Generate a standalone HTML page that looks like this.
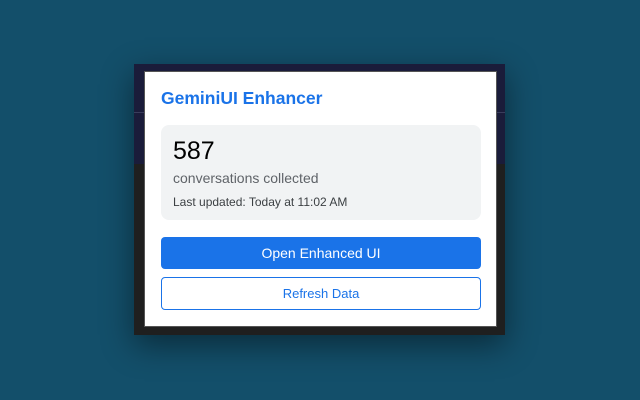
<!DOCTYPE html>
<html><head><style>
*{margin:0;padding:0;box-sizing:border-box}
body{width:640px;height:400px;background:#134f6a;position:relative;overflow:hidden;font-family:"Liberation Sans",Arial,sans-serif}
.frame{position:absolute;left:134px;top:64px;width:371px;height:271px;background:#1f1f1f;box-shadow:0 10px 30px rgba(0,0,0,0.45)}
.top{position:absolute;left:0;top:0;width:371px;height:100px;background:#1a1c3a}
.line{position:absolute;left:0;top:48px;width:371px;height:1px;background:#3a3d5c}
.panel{position:absolute;left:144px;top:71px;width:353px;height:256px;background:#fff;border:1px solid #555}
h1{position:absolute;left:161px;top:88px;font-size:17.5px;font-weight:bold;color:#1a73e8}
.card{position:absolute;left:161px;top:125px;width:320px;height:95px;background:#f1f3f4;border-radius:8px}
.n{position:absolute;left:173px;top:137px;font-size:25px;color:#000}
.c{position:absolute;left:173px;top:170px;font-size:14px;color:#5f6368}
.u{position:absolute;left:173px;top:195px;font-size:12px;color:#3c4043}
.b1{position:absolute;left:161px;top:237px;width:320px;height:32px;background:#1a73e8;border-radius:4px;color:#fff;font-size:14px;text-align:center;line-height:32px}
.b2{position:absolute;left:161px;top:277px;width:320px;height:33px;background:#fff;border:1px solid #1a73e8;border-radius:4px;color:#1a73e8;font-size:13px;text-align:center;line-height:31px}
</style></head><body>
<div class="frame"><div class="top"><div class="line"></div></div></div>
<div class="panel"></div>
<h1>GeminiUI Enhancer</h1>
<div class="card"></div>
<div class="n">587</div>
<div class="c">conversations collected</div>
<div class="u">Last updated: Today at 11:02 AM</div>
<div class="b1">Open Enhanced UI</div>
<div class="b2">Refresh Data</div>
</body></html>
